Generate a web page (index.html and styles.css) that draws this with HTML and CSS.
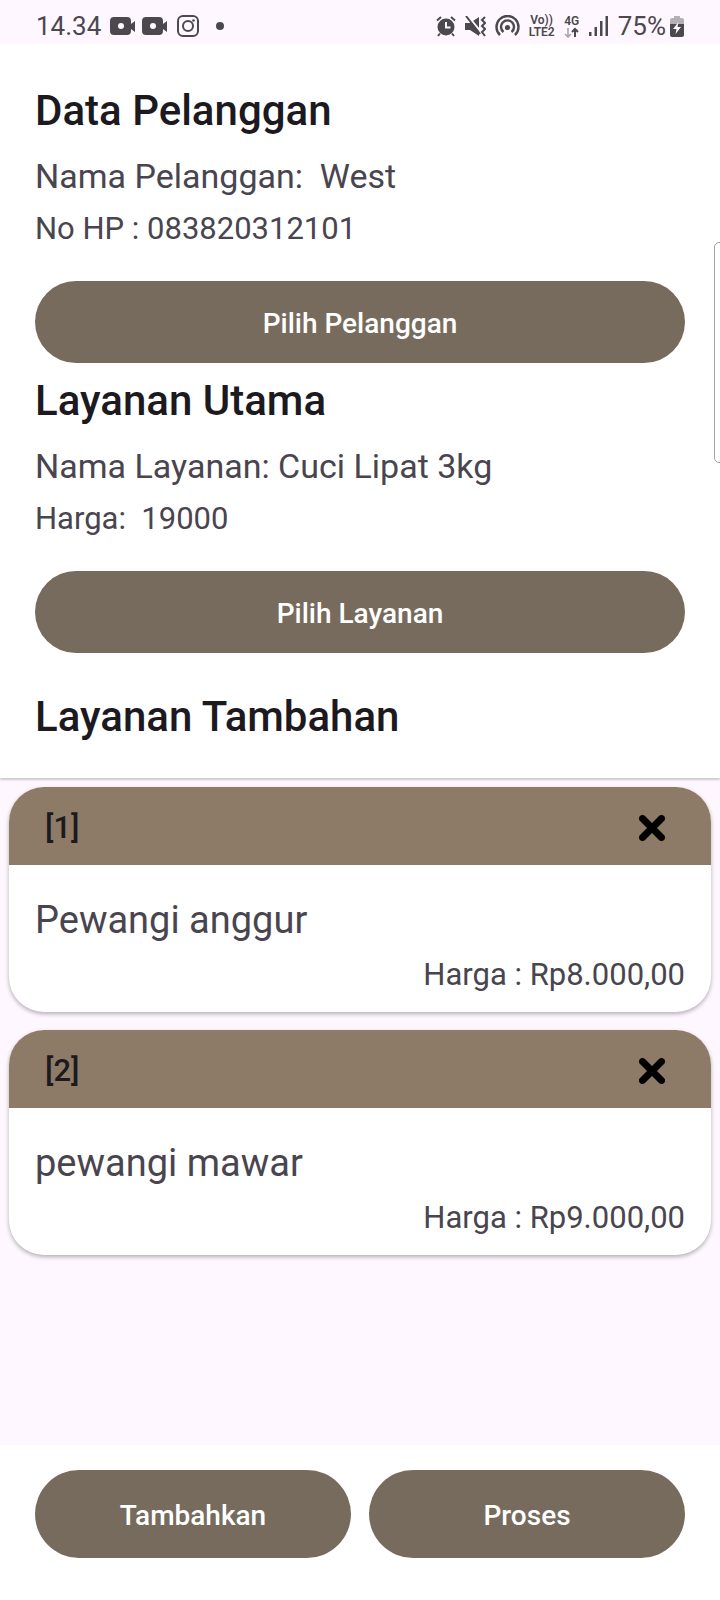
FILE: index.html
```html
<!DOCTYPE html>
<html lang="id">
<head>
<meta charset="utf-8">
<meta name="viewport" content="width=device-width, initial-scale=1">
<title>Data Pelanggan</title>
<link rel="stylesheet" href="styles.css">
</head>
<body>
<div class="status">
  <div class="status-left">
    <span class="clock">14.34</span>
    <svg class="camera" width="26" height="18" viewBox="0 0 26 18"><path fill="currentColor" fill-rule="evenodd" d="M4 0h13q4 0 4 4v3l4-3v11l-4-3v2q0 4-4 4H4q-4 0-4-4V4q0-4 4-4zm7 6a3 3 0 1 0 0 6 3 3 0 0 0 0-6z"/></svg>
    <svg class="camera" width="26" height="18" viewBox="0 0 26 18"><path fill="currentColor" fill-rule="evenodd" d="M4 0h13q4 0 4 4v3l4-3v11l-4-3v2q0 4-4 4H4q-4 0-4-4V4q0-4 4-4zm7 6a3 3 0 1 0 0 6 3 3 0 0 0 0-6z"/></svg>
    <svg class="insta" width="22" height="22" viewBox="0 0 22 22" fill="none" stroke="currentColor" stroke-width="2"><rect x="1" y="1" width="20" height="20" rx="5"/><circle cx="11" cy="11" r="5"/><circle cx="16.500" cy="5.500" r="1.300" fill="currentColor" stroke="none"/></svg>
    <span class="dot"></span>
  </div>
  <div class="status-right">
    <svg width="20" height="21" viewBox="0 0 20 21"><circle cx="10" cy="11" r="8.500" fill="currentColor"/><path d="M1 4.500 5 1M19 4.500 15 1M4 17.500 2 20M16 17.500l2 2.500" stroke="currentColor" stroke-width="2" fill="none"/><path d="M10 6v5.500h4.500" stroke="#fef7ff" stroke-width="2" fill="none"/></svg>
    <svg width="21" height="21" viewBox="0 0 21 21"><path fill="currentColor" d="M0 7h5l9-6v19l-9-6H0z"/><path d="M3 0l13 16" stroke="#fef7ff" stroke-width="2"/><path d="M1 0l14 18" stroke="currentColor" stroke-width="2"/><path d="M20 1l-3 3 3 3-3 3 3 3-3 3 3 4" stroke="currentColor" stroke-width="2" fill="none"/></svg>
    <svg width="25" height="22" viewBox="0 0 25 22" fill="none" stroke="currentColor" stroke-width="2.400"><path d="M5 20A11 11 0 1 1 20 20M8.500 17A6.500 6.500 0 1 1 16.500 17"/><circle cx="12.500" cy="12.500" r="2.600" fill="currentColor" stroke="none"/></svg>
    <span class="mini"><span>Vo))</span><span>LTE2</span></span>
    <span class="mini"><span>4G</span><svg width="16" height="11" viewBox="0 0 16 11" fill="none" stroke-width="1.600"><path d="M4 1v9M1 7l3 3 3-3" stroke="#aaa4ab"/><path d="M11 10V2M8 5l3-3 3 3" stroke="currentColor" stroke-width="2"/></svg></span>
    <svg width="20" height="20" viewBox="0 0 20 20" fill="currentColor"><path d="M0 16h2.500v4H0zM5.500 11H8v9H5.500zM11 5h2.500v15H11zM16.500 0H19v20h-2.500z"/></svg>
    <span class="battery-group"><span class="percent">75%</span>
    <svg width="14" height="21" viewBox="0 0 14 21"><path fill="#b5afb6" d="M4 0h6v2h2q2 0 2 2v4H0V4q0-2 2-2h2z"/><path fill="currentColor" d="M0 8h14v11q0 2-2 2H2q-2 0-2-2z"/><path fill="#fef7ff" d="M8.500 6 3 13h3.500L5.500 18 11 11H7.500z"/></svg></span>
  </div>
</div>

<main class="page">
  <div class="summary">
    <section class="block">
      <h2 class="title">Data Pelanggan</h2>
      <p class="name">Nama Pelanggan:&nbsp; West</p>
      <p class="detail">No HP : 083820312101</p>
      <button class="btn" type="button">Pilih Pelanggan</button>
    </section>
    <section class="block">
      <h2 class="title">Layanan Utama</h2>
      <p class="name">Nama Layanan: Cuci Lipat 3kg</p>
      <p class="detail">Harga:&nbsp; 19000</p>
      <button class="btn" type="button">Pilih Layanan</button>
    </section>
    <h2 class="title extra">Layanan Tambahan</h2>
  </div>

  <div class="cards">
    <article class="card">
      <header class="card-head"><span>[1]</span>
        <button class="close" type="button" aria-label="Hapus 1"><svg width="26" height="26" viewBox="0 0 26 26"><path d="M3.500 3.500l19 19M22.500 3.500l-19 19" stroke="#000" stroke-width="7" stroke-linecap="round"/></svg></button>
      </header>
      <div class="card-body">
        <p class="item">Pewangi anggur</p>
        <p class="detail price">Harga : Rp8.000,00</p>
      </div>
    </article>
    <article class="card">
      <header class="card-head"><span>[2]</span>
        <button class="close" type="button" aria-label="Hapus 2"><svg width="26" height="26" viewBox="0 0 26 26"><path d="M3.500 3.500l19 19M22.500 3.500l-19 19" stroke="#000" stroke-width="7" stroke-linecap="round"/></svg></button>
      </header>
      <div class="card-body">
        <p class="item">pewangi mawar</p>
        <p class="detail price">Harga : Rp9.000,00</p>
      </div>
    </article>
  </div>
</main>

<footer class="actions">
  <button class="btn tall" type="button">Tambahkan</button>
  <button class="btn tall" type="button">Proses</button>
</footer>
<div class="edge-handle"></div>
</body>
</html>
```
FILE: styles.css
```css
* { box-sizing: border-box; }

body {
  margin: 0;
  min-height: 100vh;
  display: flex;
  flex-direction: column;
  position: relative;
  overflow-x: hidden;
  background: #fef7ff;
  color: #49454f;
  font-family: Roboto, "Liberation Sans", sans-serif;
}

h2, p { margin: 0; }
svg { display: block; flex: none; }

.status {
  height: 44px;
  padding: 8px 36px 0 36px;
  display: flex;
  justify-content: space-between;
  align-items: center;
  color: #4b484e;
}
.status-left, .status-right, .battery-group { display: flex; align-items: center; }
.status-left { gap: 9px; }
.status-right { gap: 9px; }
.battery-group { gap: 4px; }
.clock, .percent { font-size: 26px; line-height: 32px; }
.camera { margin-right: -3px; }
.insta { margin-left: 3px; }
.dot {
  width: 8px;
  height: 8px;
  margin-left: 8px;
  border-radius: 50%;
  background: currentColor;
}
.mini {
  display: flex;
  flex-direction: column;
  align-items: center;
  font-size: 12px;
  line-height: 12px;
  font-weight: 600;
}

.page { flex: 1; }
.summary {
  padding: 43px 35px 37px;
  background: #fff;
  box-shadow: 0 2px 2px rgba(0, 0, 0, 0.2);
}
.block { display: flex; flex-direction: column; }
.block + .block { margin-top: 14px; }
.title {
  font-size: 42px;
  line-height: 48px;
  font-weight: 500;
  color: #1c1a1f;
}
.extra { margin-top: 40px; }
.name { margin-top: 19px; font-size: 34px; line-height: 44px; }
.detail { margin-top: 11px; font-size: 31px; line-height: 40px; }

.btn {
  height: 82px;
  padding: 4px 24px 0;
  border: 0;
  border-radius: 44px;
  background: #776b5d;
  color: #fff;
  font: 500 28px/36px Roboto, "Liberation Sans", sans-serif;
  cursor: pointer;
}
.block .btn { margin-top: 32px; }
.btn.tall { flex: 1; height: 88px; }

.cards {
  display: flex;
  flex-direction: column;
  gap: 18px;
  padding: 9px 9px 18px;
}
.card {
  overflow: hidden;
  border-radius: 35px;
  background: #fff;
  box-shadow: 0 2px 4px rgba(0, 0, 0, 0.3);
}
.card-head {
  height: 78px;
  padding: 3px 46px 0 36px;
  display: flex;
  align-items: center;
  justify-content: space-between;
  background: #8d7b68;
  color: #1c1a1f;
  font-size: 31px;
  line-height: 40px;
  font-weight: 500;
}
.close { padding: 0; border: 0; background: none; cursor: pointer; }
.card-body { padding: 33px 26px 17px; }
.item { font-size: 38px; line-height: 44px; }
.price { margin-top: 13px; text-align: right; }

.actions {
  display: flex;
  gap: 18px;
  padding: 25px 35px 42px;
  background: #fff;
}

.edge-handle {
  position: absolute;
  top: 242px;
  right: -6px;
  width: 12px;
  height: 221px;
  border: 1px solid #a3a3a3;
  border-radius: 5px;
  background: #fff;
}
```
